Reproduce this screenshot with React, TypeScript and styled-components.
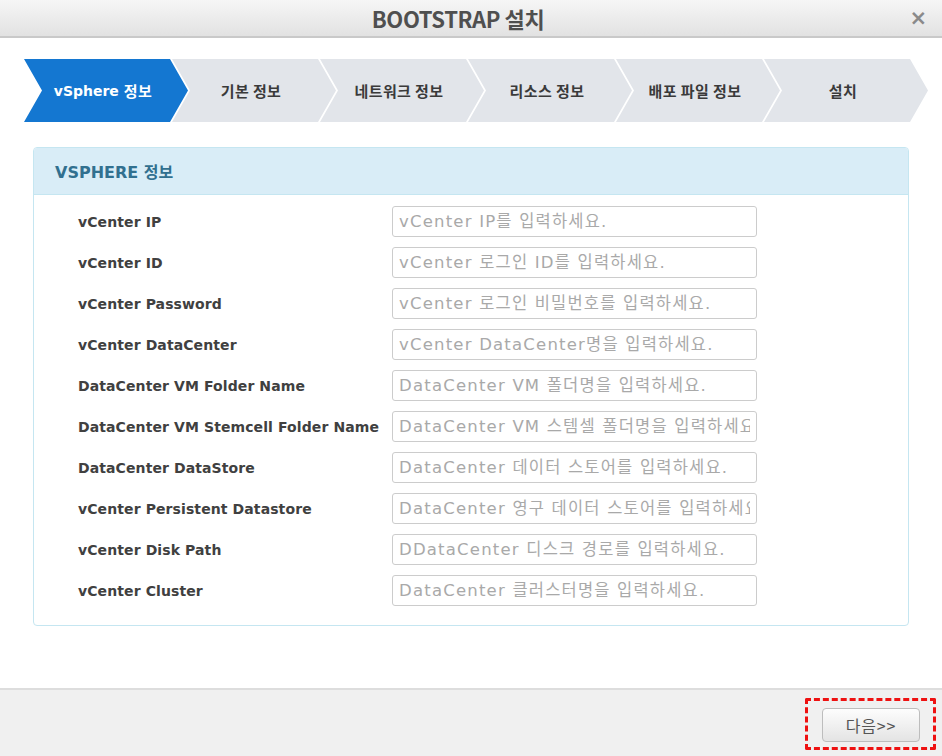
import React from 'react'
import styled, { createGlobalStyle } from 'styled-components'

const GlobalStyle = createGlobalStyle`
  html, body {
    margin: 0;
    padding: 0;
    background: #ffffff;
  }
  * {
    box-sizing: border-box;
  }
`

const Modal = styled.div`
  width: 942px;
  height: 756px;
  display: flex;
  flex-direction: column;
  background: #ffffff;
  font-family: 'DejaVu Sans', 'Noto Sans CJK KR', sans-serif;
  overflow: hidden;
`

const Header = styled.header`
  height: 38px;
  flex-shrink: 0;
  display: flex;
  align-items: center;
  justify-content: center;
  position: relative;
  background: linear-gradient(#f6f6f6, #e2e2e2);
  border-bottom: 2px solid #c9c9c9;

  h1 {
    margin: 0 26px 0 0;
    font-family: 'Noto Sans CJK KR', sans-serif;
    font-size: 22px;
    font-weight: bold;
    color: #4f4f4f;
    letter-spacing: -0.4px;
  }
`

const Close = styled.span`
  position: absolute;
  right: 15px;
  top: 6px;
  font-family: 'DejaVu Sans', sans-serif;
  font-size: 21px;
  font-weight: bold;
  color: #8a8a8a;
`

const Main = styled.main`
  flex: 1;
  padding: 21px 33px 0;
`

const Steps = styled.div`
  display: flex;
  height: 63px;
  margin: 0 0 25px -9px;
`

const Step = styled.div<{ $active?: boolean }>`
  width: 164px;
  height: 100%;
  flex-shrink: 0;
  display: flex;
  align-items: center;
  justify-content: center;
  padding-right: 6px;
  background: ${(p) => (p.$active ? '#1477d1' : '#e2e5ea')};
  color: ${(p) => (p.$active ? '#ffffff' : '#3a3a3a')};
  font-family: 'Noto Sans CJK KR', sans-serif;
  font-size: 15px;
  font-weight: bold;
  letter-spacing: 0.4px;
  clip-path: polygon(0 0, calc(100% - 18px) 0, 100% 50%, calc(100% - 18px) 100%, 0 100%, 18px 50%);

  & + & {
    margin-left: -16px;
  }

  b {
    font-family: 'DejaVu Sans', sans-serif;
    font-size: 14px;
    letter-spacing: 0;
    margin-right: 5px;
  }
`

const Panel = styled.section`
  border: 1px solid #c5e6f1;
  border-radius: 4px;
  overflow: hidden;
`

const PanelTitle = styled.div`
  height: 47px;
  display: flex;
  align-items: center;
  padding-left: 21px;
  background: #d9edf7;
  border-bottom: 1px solid #c5e6f1;
  color: #31708f;
  font-family: 'DejaVu Sans', 'Noto Sans CJK KR', sans-serif;
  font-size: 16px;
  font-weight: bold;
`

const Form = styled.div`
  display: flex;
  flex-direction: column;
  gap: 10px;
  padding: 11px 0 19px 44px;
`

const Row = styled.div`
  display: flex;
  align-items: center;
  height: 31px;
`

const Label = styled.label`
  width: 314px;
  flex-shrink: 0;
  font-family: 'DejaVu Sans', sans-serif;
  font-size: 14px;
  font-weight: bold;
  color: #404040;
  letter-spacing: 0.1px;
`

const Input = styled.input`
  width: 365px;
  height: 31px;
  padding: 0 6px;
  border: 1px solid #cccccc;
  border-radius: 3px;
  font-family: 'DejaVu Sans', 'Noto Sans CJK KR', sans-serif;
  font-size: 16.5px;
  letter-spacing: 1.2px;
  color: #333333;
  outline: none;

  &::placeholder {
    color: #a9a9a9;
  }
`

const Footer = styled.footer`
  height: 68px;
  flex-shrink: 0;
  display: flex;
  justify-content: flex-end;
  align-items: flex-start;
  padding: 8px 6px 0 0;
  background: #f0f0f0;
  border-top: 2px solid #dddddd;
`

const Highlight = styled.div`
  width: 131px;
  height: 52px;
  padding: 7px 13px 0 14px;
  border: 3px dashed #ee1111;
  border-radius: 2px;
`

const NextButton = styled.button`
  width: 98px;
  height: 34px;
  border: 1px solid #bdbdbd;
  border-radius: 4px;
  background: linear-gradient(#fdfdfd, #e4e4e4);
  color: #555555;
  font-family: 'Noto Sans CJK KR', sans-serif;
  font-size: 16px;
  letter-spacing: 0.8px;
  cursor: pointer;
`

const steps = ['기본 정보', '네트워크 정보', '리소스 정보', '배포 파일 정보', '설치']

const fields: [string, string][] = [
  ['vCenter IP', 'vCenter IP를 입력하세요.'],
  ['vCenter ID', 'vCenter 로그인 ID를 입력하세요.'],
  ['vCenter Password', 'vCenter 로그인 비밀번호를 입력하세요.'],
  ['vCenter DataCenter', 'vCenter DataCenter명을 입력하세요.'],
  ['DataCenter VM Folder Name', 'DataCenter VM 폴더명을 입력하세요.'],
  ['DataCenter VM Stemcell Folder Name', 'DataCenter VM 스템셀 폴더명을 입력하세요.'],
  ['DataCenter DataStore', 'DataCenter 데이터 스토어를 입력하세요.'],
  ['vCenter Persistent Datastore', 'DataCenter 영구 데이터 스토어를 입력하세요.'],
  ['vCenter Disk Path', 'DDataCenter 디스크 경로를 입력하세요.'],
  ['vCenter Cluster', 'DataCenter 클러스터명을 입력하세요.'],
]

const App: React.FC = () => {
  return (
    <Modal>
      <GlobalStyle />
      <Header>
        <h1>BOOTSTRAP 설치</h1>
        <Close>×</Close>
      </Header>
      <Main>
        <Steps>
          <Step $active>
            <b>vSphere</b>정보
          </Step>
          {steps.map((s) => (
            <Step key={s}>{s}</Step>
          ))}
        </Steps>
        <Panel>
          <PanelTitle>VSPHERE 정보</PanelTitle>
          <Form>
            {fields.map(([label, placeholder]) => (
              <Row key={label}>
                <Label>{label}</Label>
                <Input placeholder={placeholder} />
              </Row>
            ))}
          </Form>
        </Panel>
      </Main>
      <Footer>
        <Highlight>
          <NextButton>다음&gt;&gt;</NextButton>
        </Highlight>
      </Footer>
    </Modal>
  )
}

export default App
